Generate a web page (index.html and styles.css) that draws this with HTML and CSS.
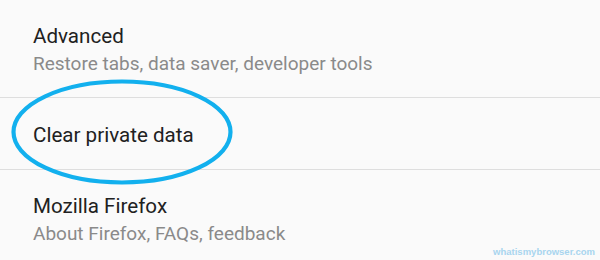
FILE: index.html
```html
<!DOCTYPE html>
<html>
<head>
<meta charset="utf-8">
<link rel="stylesheet" href="styles.css">
</head>
<body>
<div class="list">
  <div class="item first">
    <div class="title">Advanced</div>
    <div class="summary">Restore tabs, data saver, developer tools</div>
  </div>
  <div class="item single">
    <div class="title">Clear private data</div>
  </div>
  <div class="item last">
    <div class="title">Mozilla Firefox</div>
    <div class="summary">About Firefox, FAQs, feedback</div>
  </div>
</div>
<svg class="circle" width="600" height="260" viewBox="0 0 600 260">
  <ellipse cx="122" cy="132" rx="108.5" ry="50.5" fill="none" stroke="#12b0ee" stroke-width="4.2"/>
</svg>
<div class="watermark">whatismybrowser.com</div>
</body>
</html>
```
FILE: styles.css
```css
html, body {
  margin: 0;
  padding: 0;
  width: 600px;
  height: 260px;
  overflow: hidden;
  background: #fafafa;
  font-family: Roboto, "Noto Sans", sans-serif;
}
.list {
  display: flex;
  flex-direction: column;
}
.item {
  padding: 0 33px;
  border-bottom: 1px solid #dedede;
}
.item.first {
  padding-top: 22px;
  padding-bottom: 19px;
}
.item.single {
  padding-top: 23px;
  padding-bottom: 20px;
}
.item.last {
  padding-top: 22px;
  border-bottom: none;
}
.title {
  font-size: 20.6px;
  line-height: 28px;
  color: #212121;
}
.summary {
  font-size: 19px;
  line-height: 28px;
  color: #8a8a8a;
}
.circle {
  position: absolute;
  left: 0;
  top: 0;
}
.watermark {
  position: absolute;
  right: 5px;
  bottom: 2px;
  font-size: 9.5px;
  line-height: 12px;
  font-weight: bold;
  color: #a8d5ef;
  font-family: "Liberation Sans", Arial, sans-serif;
}
```
